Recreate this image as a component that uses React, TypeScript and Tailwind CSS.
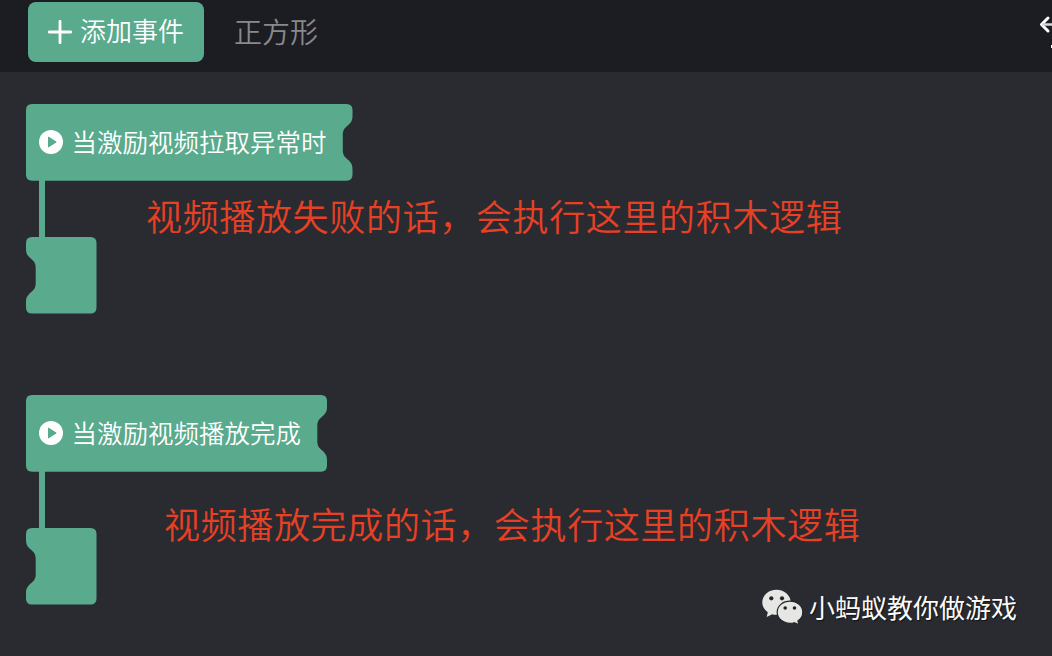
import React from 'react';

interface EventGroupProps {
  label: string;
  note: string;
  width: number;
  noteClass: string;
}

const PlayIcon: React.FC = () => (
  <svg width="24" height="24" viewBox="0 0 24 24" className="shrink-0">
    <circle cx="12" cy="12" r="12" fill="#fff" />
    <path d="M9 7.2v9.6q0 .8.8.4l7.4-4.7q.7-.5 0-1L9.8 6.8Q9 6.4 9 7.2z" fill="#5aaa8d" />
  </svg>
);

const EventGroup: React.FC<EventGroupProps> = ({ label, note, width, noteClass }) => {
  const r = width;
  const head = `M6 0H${r - 6}Q${r} 0 ${r} 6V12C${r} 17 ${r - 2} 19 ${r - 4.5} 21.3C${r - 7.5} 24 ${r - 9.7} 25.5 ${r - 9.7} 31V46C${r - 9.7} 51.5 ${r - 7.5} 53 ${r - 4.5} 55.7C${r - 2} 58 ${r} 60 ${r} 65V70.5Q${r} 76.7 ${r - 6} 76.7H6Q0 76.7 0 70.5V6Q0 0 6 0Z`;

  return (
    <section className="h-[210px]">
      <div className="relative flex h-[77px] items-center pl-[13px]" style={{ width }}>
        <svg className="absolute inset-0" width={width} height="77">
          <path d={head} fill="#5aaa8d" />
        </svg>
        <div className="relative flex items-center gap-[8.5px] pb-px">
          <PlayIcon />
          <span className="-mt-[3px] whitespace-nowrap text-[25.5px] leading-[38px] text-white">{label}</span>
        </div>
      </div>
      <div className="flex h-14 pl-[13px]">
        <div className="-mt-px h-[58px] w-[6px] shrink-0 bg-[#5aaa8d]" />
        <p className={`whitespace-nowrap text-[36px] leading-[54px] tracking-[0.65px] text-[#e64025] ${noteClass}`}>{note}</p>
      </div>
      <svg width="71" height="77" className="block">
        <path
          d="M6 0H64.5Q70.5 0 70.5 6V70.5Q70.5 76.5 64.5 76.5H6Q0 76.5 0 70.5V65C0 60 2 58 4.5 55.7C7.5 53 9.7 51.5 9.7 46V31C9.7 25.5 7.5 24 4.5 21.3C2 19 0 17 0 12V6Q0 0 6 0Z"
          fill="#5aaa8d"
        />
      </svg>
    </section>
  );
};

const WeChatIcon: React.FC = () => (
  <svg width="42" height="36" viewBox="0 0 42 36" className="shrink-0">
    <path d="M14.5.8C6.5.8.3 6.3.3 13.5c0 4 2.2 7.4 5.5 9.7L4.7 28l5.5-2.8c1.5.4 2.8.6 4.3.6 8 0 14.3-5.5 14.3-12.3S22.5.8 14.5.8z" fill="#e6e7e5" />
    <path
      d="M28 12.2c-7.2 0-12.8 4.8-12.8 11S20.8 34.3 28 34.3c1.5 0 2.9-.2 4.2-.6l4.9 2-1.2-3.8c3-2 4.900-5 4.900-8.700 0-6.200-5.600-11-12.800-11z"
      fill="#e6e7e5"
      stroke="#242529"
      strokeWidth="1.2"
    />
    <g fill="#242529">
      <circle cx="9.3" cy="9.3" r="2.1" />
      <circle cx="20" cy="9.3" r="2.1" />
      <circle cx="23.2" cy="19" r="1.8" />
      <circle cx="32.5" cy="19" r="1.8" />
    </g>
  </svg>
);

const App: React.FC = () => (
  <div className="flex h-[656px] w-[1052px] flex-col overflow-hidden bg-[#2a2b30] font-['Noto_Sans_CJK_SC',sans-serif] font-[350]">
    <header className="flex h-[72px] shrink-0 items-start bg-[#1c1d22] pl-7 pt-[2px]">
      <button className="flex h-[60px] w-44 shrink-0 items-center rounded-lg bg-[#5aaa8d] pl-5 text-white">
        <svg width="24" height="24" viewBox="0 0 24 24" fill="none" stroke="currentColor" strokeWidth="2.8" strokeLinecap="round">
          <path d="M12 1.3v21.4M1.3 12h21.4" />
        </svg>
        <span className="-mt-1 ml-2 whitespace-nowrap text-[26px] leading-[38px]">添加事件</span>
      </button>
      <span className="-mt-px ml-[30px] flex h-[60px] items-center whitespace-nowrap text-[28px] text-[#88898c]">正方形</span>
      <svg className="ml-auto mt-[10px] shrink-0" width="13" height="40" viewBox="0 0 13 40" fill="none" stroke="#fff" strokeWidth="3">
        <path d="M9 6L2.5 12.5L9 19" strokeLinecap="round" strokeLinejoin="round" />
        <path d="M3 12.5H13" stroke="#d8d8d9" strokeWidth="2.5" />
        <path d="M12 34.5h1" />
      </svg>
    </header>
    <main className="flex flex-col gap-[81px] pl-[26px] pt-8">
      <EventGroup label="当激励视频拉取异常时" note="视频播放失败的话，会执行这里的积木逻辑" width={326.5} noteClass="ml-[101px] mt-[7px]" />
      <EventGroup label="当激励视频播放完成" note="视频播放完成的话，会执行这里的积木逻辑" width={301} noteClass="ml-[119px] mt-[24px]" />
    </main>
    <footer className="-mt-[17px] flex items-center gap-[5px] self-end pr-[35px]">
      <WeChatIcon />
      <span className="whitespace-nowrap text-[26px] font-normal leading-[38px] text-[#fafafa] [text-shadow:1px_1px_1px_#111]">小蚂蚁教你做游戏</span>
    </footer>
  </div>
);

export default App;
